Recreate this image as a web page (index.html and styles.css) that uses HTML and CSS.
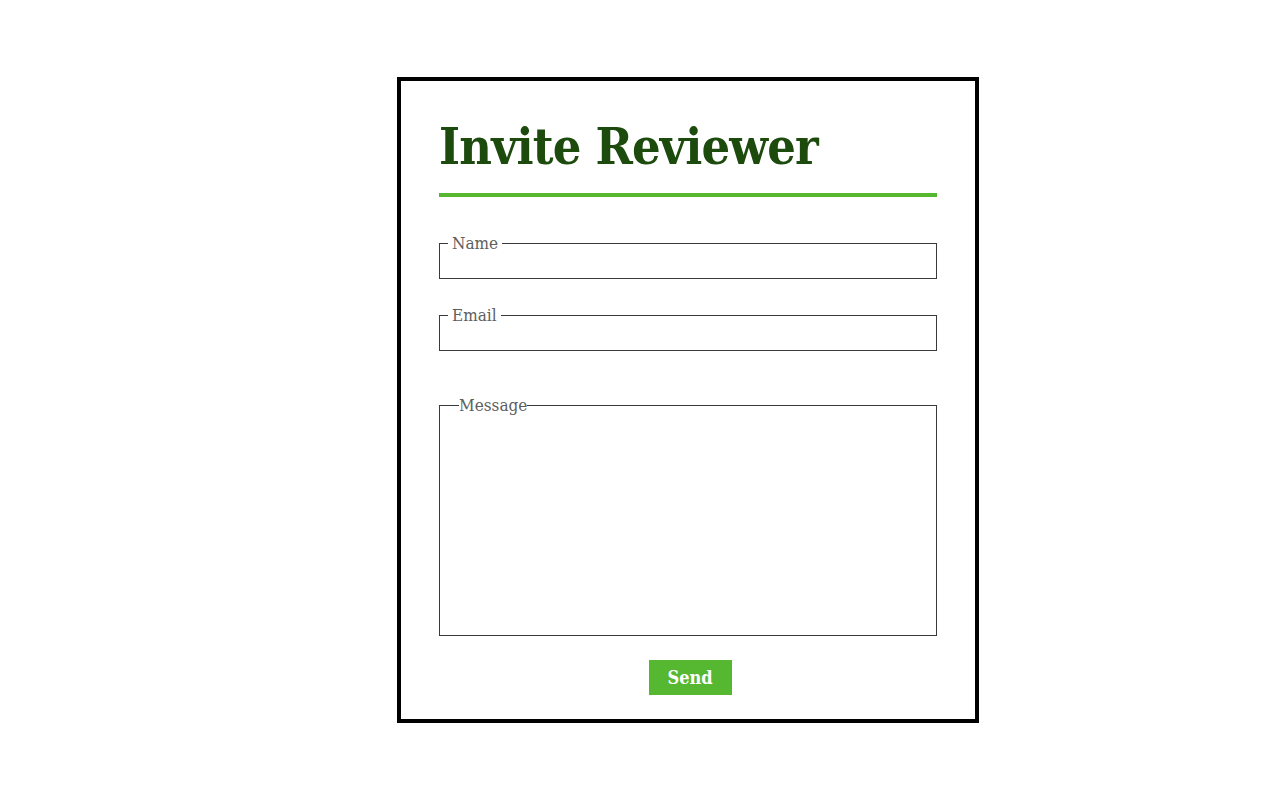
FILE: index.html
```html
<!DOCTYPE html>
<html lang="en">
<head>
<meta charset="utf-8">
<title>Invite Reviewer</title>
<link rel="stylesheet" href="styles.css">
</head>
<body>
<div class="page">
  <form class="card">
    <h1 class="title">Invite Reviewer</h1>
    <div class="rule"></div>
    <fieldset class="field">
      <legend class="label">Name</legend>
      <input class="input" type="text">
    </fieldset>
    <fieldset class="field">
      <legend class="label">Email</legend>
      <input class="input" type="email">
    </fieldset>
    <fieldset class="field field-message">
      <legend class="label label-tight">Message</legend>
      <textarea class="textarea"></textarea>
    </fieldset>
    <div class="actions">
      <button class="send" type="button">Send</button>
    </div>
  </form>
</div>
</body>
</html>
```
FILE: styles.css
```css
html, body {
  margin: 0;
  padding: 0;
  background: #ffffff;
}
body {
  font-family: "DejaVu Serif", "Liberation Serif", serif;
}
.page {
  padding: 77px 0 0 397px;
}
.card {
  box-sizing: border-box;
  width: 582px;
  height: 646px;
  border: 4px solid #000;
  padding: 0 38px;
  display: flex;
  flex-direction: column;
}
.title {
  margin: 36px 0 0;
  font-size: 50px;
  font-weight: bold;
  font-stretch: condensed;
  line-height: 60px;
  color: #1d4b0e;
  letter-spacing: -0.8px;
}
.rule {
  height: 4px;
  background: #56b830;
  margin-top: 16px;
}
.field {
  margin: 0;
  padding: 0;
  border: 1px solid #3a3a3a;
  min-width: 0;
}
.field + .field { margin-top: 26px; }
.field:first-of-type { margin-top: 36px; }
.label {
  margin-left: 8px;
  padding: 0 4px;
  font-size: 17px;
  font-weight: 300;
  line-height: 20px;
  color: #5e5e5e;
  font-stretch: condensed;
}
.label-tight {
  margin-left: 19px;
  padding: 0;
}
.input {
  display: block;
  box-sizing: border-box;
  width: 100%;
  height: 25px;
  border: 0;
  outline: 0;
  background: transparent;
}
.field-message { margin-top: 44px !important; }
.textarea {
  display: block;
  box-sizing: border-box;
  width: 100%;
  height: 220px;
  border: 0;
  outline: 0;
  resize: none;
  background: transparent;
}
.actions {
  display: flex;
  justify-content: center;
  margin-top: 24px;
  padding-left: 4px;
}
.send {
  width: 83px;
  height: 35px;
  border: 0;
  padding: 0;
  background: #56b830;
  color: #fff;
  font-family: "DejaVu Serif", serif;
  font-stretch: condensed;
  font-weight: bold;
  font-size: 18px;
  cursor: pointer;
}
```
